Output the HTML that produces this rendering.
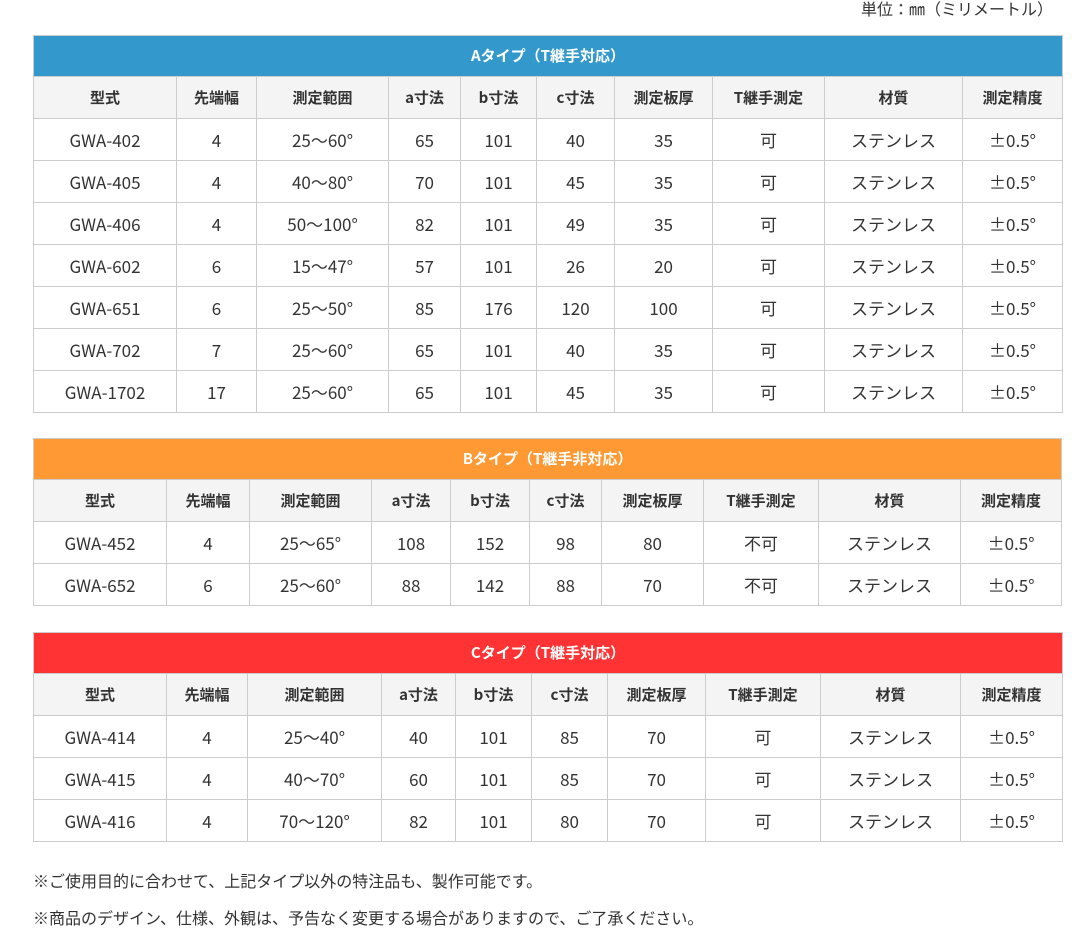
<!DOCTYPE html>
<html><head><meta charset="utf-8"><style>
body{margin:0;background:#fff;font-family:"Noto Sans CJK JP",sans-serif;color:#333;width:1091px;height:939px;overflow:hidden;position:relative}
.unit{position:absolute;right:38px;top:-2px;font-size:16px;line-height:20px}
table{position:absolute;left:33px;width:1029px;border-collapse:collapse;table-layout:fixed;font-size:17px;line-height:20px}
td,th{border:1px solid #ccc;text-align:center;height:41px;padding:0}
th{background:#f4f4f4;font-weight:bold;font-size:15px}
.t{color:#fff;font-weight:bold;font-size:15px;height:40px}
.note{position:absolute;left:33px;font-size:16px;line-height:20px}
</style></head><body>
<div class="unit">単位：㎜（ミリメートル）</div>
<table style="top:35px">
<colgroup><col style="width:143px"><col style="width:80px"><col style="width:132px"><col style="width:72px"><col style="width:76px"><col style="width:78px"><col style="width:98px"><col style="width:112px"><col style="width:138px"><col style="width:100px"></colgroup>
<tr><td colspan="10" class="t" style="background:#3399cc">Aタイプ（T継手対応）</td></tr>
<tr><th>型式</th><th>先端幅</th><th>測定範囲</th><th>a寸法</th><th>b寸法</th><th>c寸法</th><th>測定板厚</th><th>T継手測定</th><th>材質</th><th>測定精度</th></tr>
<tr><td>GWA-402</td><td>4</td><td>25～60°</td><td>65</td><td>101</td><td>40</td><td>35</td><td>可</td><td>ステンレス</td><td>±0.5°</td></tr>
<tr><td>GWA-405</td><td>4</td><td>40～80°</td><td>70</td><td>101</td><td>45</td><td>35</td><td>可</td><td>ステンレス</td><td>±0.5°</td></tr>
<tr><td>GWA-406</td><td>4</td><td>50～100°</td><td>82</td><td>101</td><td>49</td><td>35</td><td>可</td><td>ステンレス</td><td>±0.5°</td></tr>
<tr><td>GWA-602</td><td>6</td><td>15～47°</td><td>57</td><td>101</td><td>26</td><td>20</td><td>可</td><td>ステンレス</td><td>±0.5°</td></tr>
<tr><td>GWA-651</td><td>6</td><td>25～50°</td><td>85</td><td>176</td><td>120</td><td>100</td><td>可</td><td>ステンレス</td><td>±0.5°</td></tr>
<tr><td>GWA-702</td><td>7</td><td>25～60°</td><td>65</td><td>101</td><td>40</td><td>35</td><td>可</td><td>ステンレス</td><td>±0.5°</td></tr>
<tr><td>GWA-1702</td><td>17</td><td>25～60°</td><td>65</td><td>101</td><td>45</td><td>35</td><td>可</td><td>ステンレス</td><td>±0.5°</td></tr>
</table>
<table style="top:438px">
<colgroup><col style="width:133px"><col style="width:83px"><col style="width:122px"><col style="width:79px"><col style="width:79px"><col style="width:72px"><col style="width:102px"><col style="width:115px"><col style="width:142px"><col style="width:101px"></colgroup>
<tr><td colspan="10" class="t" style="background:#ff9933">Bタイプ（T継手非対応）</td></tr>
<tr><th>型式</th><th>先端幅</th><th>測定範囲</th><th>a寸法</th><th>b寸法</th><th>c寸法</th><th>測定板厚</th><th>T継手測定</th><th>材質</th><th>測定精度</th></tr>
<tr><td>GWA-452</td><td>4</td><td>25～65°</td><td>108</td><td>152</td><td>98</td><td>80</td><td>不可</td><td>ステンレス</td><td>±0.5°</td></tr>
<tr><td>GWA-652</td><td>6</td><td>25～60°</td><td>88</td><td>142</td><td>88</td><td>70</td><td>不可</td><td>ステンレス</td><td>±0.5°</td></tr>
</table>
<table style="top:632px">
<colgroup><col style="width:133px"><col style="width:81px"><col style="width:134px"><col style="width:74px"><col style="width:76px"><col style="width:76px"><col style="width:98px"><col style="width:115px"><col style="width:140px"><col style="width:102px"></colgroup>
<tr><td colspan="10" class="t" style="background:#ff3333">Cタイプ（T継手対応）</td></tr>
<tr><th>型式</th><th>先端幅</th><th>測定範囲</th><th>a寸法</th><th>b寸法</th><th>c寸法</th><th>測定板厚</th><th>T継手測定</th><th>材質</th><th>測定精度</th></tr>
<tr><td>GWA-414</td><td>4</td><td>25～40°</td><td>40</td><td>101</td><td>85</td><td>70</td><td>可</td><td>ステンレス</td><td>±0.5°</td></tr>
<tr><td>GWA-415</td><td>4</td><td>40～70°</td><td>60</td><td>101</td><td>85</td><td>70</td><td>可</td><td>ステンレス</td><td>±0.5°</td></tr>
<tr><td>GWA-416</td><td>4</td><td>70～120°</td><td>82</td><td>101</td><td>80</td><td>70</td><td>可</td><td>ステンレス</td><td>±0.5°</td></tr>
</table>
<div class="note" style="top:870px">※ご使用目的に合わせて、上記タイプ以外の特注品も、製作可能です。</div>
<div class="note" style="top:907px">※商品のデザイン、仕様、外観は、予告なく変更する場合がありますので、ご了承ください。</div>
</body></html>
